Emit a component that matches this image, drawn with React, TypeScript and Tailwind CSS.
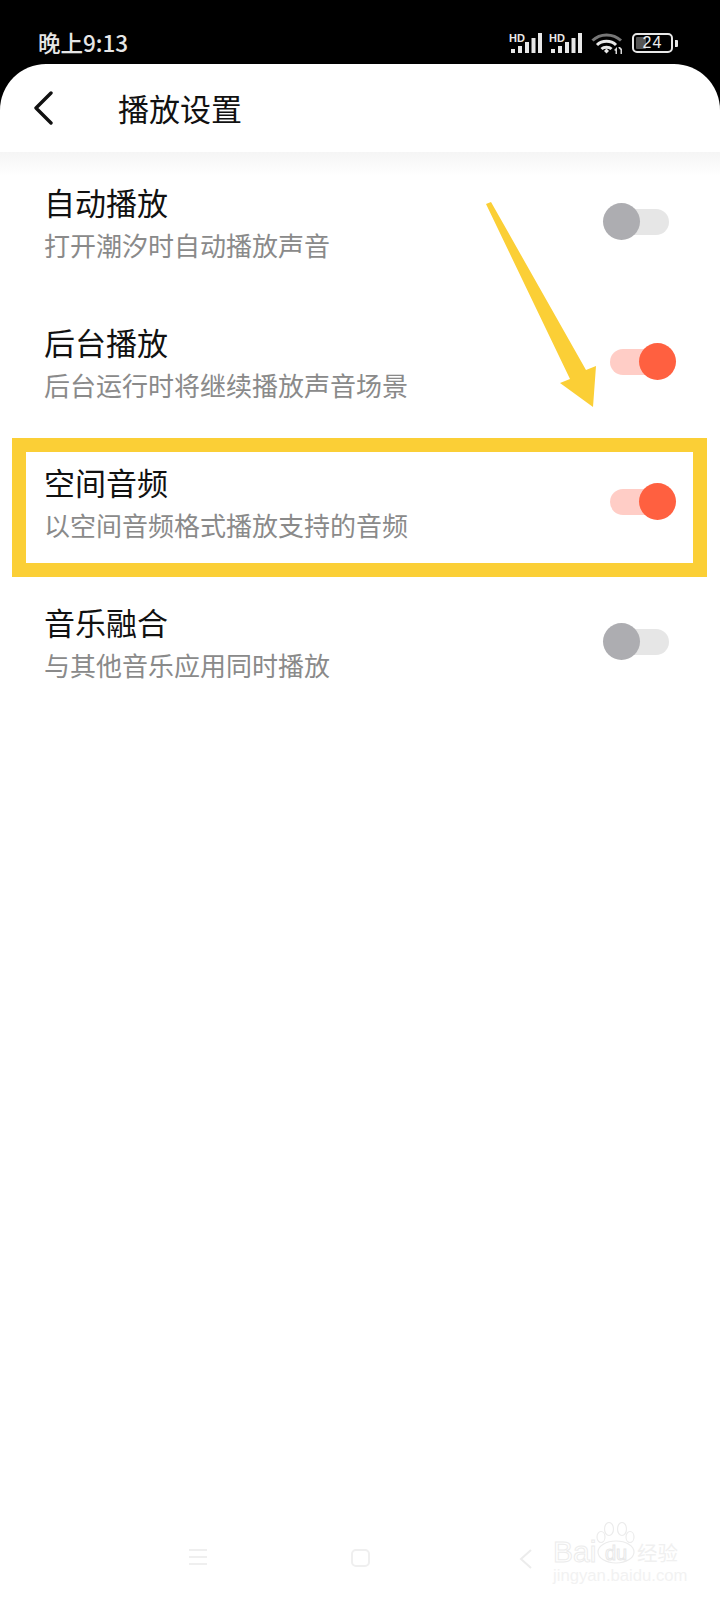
import React from 'react';

const settings = [
  { title: '自动播放', desc: '打开潮汐时自动播放声音', on: false },
  { title: '后台播放', desc: '后台运行时将继续播放声音场景', on: true },
  { title: '空间音频', desc: '以空间音频格式播放支持的音频', on: true, marked: true },
  { title: '音乐融合', desc: '与其他音乐应用同时播放', on: false },
];

const Signal = () => (
  <svg width="33" height="22" viewBox="0 0 33 22" className="block">
    <text x="0" y="9.5" fontSize="11" fontWeight="700" fill="#e8e8e8" fontFamily="'Liberation Sans', sans-serif">HD</text>
    <rect x="2" y="17" width="4" height="4" fill="#e8e8e8" />
    <rect x="9" y="14" width="4" height="7" fill="#e8e8e8" />
    <rect x="16" y="10" width="4" height="11" fill="#e8e8e8" />
    <rect x="22.5" y="6" width="4" height="15" fill="#e8e8e8" />
    <rect x="29" y="1" width="4" height="20" fill="#e8e8e8" />
  </svg>
);

const Wifi = () => (
  <svg width="32" height="24" viewBox="0 0 32 24" fill="none" className="block">
    <path d="M1.5 9.5 C9 2 22 2 30 9.5" stroke="#777" strokeWidth="3" />
    <path d="M6 14 C11 9 20 9 25 14" stroke="#e8e8e8" strokeWidth="3" />
    <path d="M10.5 18 C13 15.5 18 15.5 20.5 18" stroke="#e8e8e8" strokeWidth="3" />
    <path d="M13 20 L15.5 17.5 L18 20 L15.5 22.5 Z" fill="#e8e8e8" />
    <path d="M23 19 L26 16 V23 H24.5 V20 Z M27.5 16 H29 L31 18 V23 H29.5 V19 L27.5 17 Z" fill="#d8d8d8" />
  </svg>
);

const Battery = () => (
  <div className="flex items-center gap-[2px]">
    <div className="w-[41px] h-[20px] rounded-[5px] border-2 border-[#e8e8e8] p-[2px] relative">
      <div className="w-[10px] h-full bg-[#555] rounded-[1px]" />
      <span className="absolute inset-0 flex items-center justify-center text-[16px] leading-none tracking-[1px] text-[#eeeeee] font-['Liberation_Sans',sans-serif]">24</span>
    </div>
    <div className="w-[3px] h-[7px] bg-[#e8e8e8] rounded-r-[1px]" />
  </div>
);

const Toggle = ({ on }: { on: boolean }) => (
  <div className={`relative w-[59px] h-[26px] rounded-full mt-[52px] ${on ? 'bg-[#ffcdc6]' : 'bg-[#e6e6e6]'}`}>
    <div
      className={`absolute top-[-6px] w-[37px] h-[37px] rounded-full ${
        on ? 'right-[-7px] bg-[#ff6040]' : 'left-[-7px] bg-[#adadb1]'
      }`}
    />
  </div>
);

const Watermark = () => (
  <div className="absolute left-[553px] top-[1522px] w-[130px] h-[62px] pointer-events-none">
    <svg width="42" height="42" viewBox="0 0 42 42" fill="none" stroke="#ececec" strokeWidth="1.2" className="absolute left-[42px] top-0">
      <ellipse cx="14" cy="7" rx="4.5" ry="6.5" />
      <ellipse cx="27" cy="7" rx="4.5" ry="6.5" />
      <ellipse cx="6" cy="15" rx="4" ry="5.5" />
      <ellipse cx="35" cy="15" rx="4" ry="5.5" />
      <ellipse cx="21" cy="30" rx="18" ry="11" />
    </svg>
    <span className="absolute left-0 top-[13px] text-[30px] leading-[34px] text-transparent font-['Liberation_Sans',sans-serif] [-webkit-text-stroke:1px_#ececec]">
      Bai
    </span>
    <span className="absolute left-[52px] top-[20px] text-[20px] leading-[22px] text-transparent font-['Liberation_Sans',sans-serif] [-webkit-text-stroke:1px_#e8e8e8]">
      du
    </span>
    <span className="absolute left-[84px] top-[16px] text-[20.5px] leading-[28px] whitespace-nowrap text-[#f0f0f0]">
      经验
    </span>
    <span className="absolute left-0 top-[45px] text-[16.7px] leading-[18px] whitespace-nowrap text-[#f2f2f2] font-['Liberation_Sans',sans-serif]">
      jingyan.baidu.com
    </span>
  </div>
);

export default function App() {
  return (
    <div className="relative w-[720px] h-[1600px] bg-black flex flex-col font-['Noto_Sans_CJK_SC','Noto_Sans',sans-serif] overflow-hidden">
      {/* Status bar */}
      <div className="h-[64px] shrink-0 flex items-start justify-between pl-[38px] pr-[42px] pt-[29px]">
        <span className="text-[22.5px] leading-[26px] font-medium text-[#e6e6e6]">晚上9:13</span>
        <div className="flex items-center gap-[7px] mt-[2px]">
          <Signal />
          <Signal />
          <div className="ml-[2px] mr-[2px]">
            <Wifi />
          </div>
          <Battery />
        </div>
      </div>

      <div className="flex-1 flex flex-col bg-white rounded-t-[46px]">
        {/* Header */}
        <div className="h-[88px] shrink-0 flex items-center pl-[33px]">
          <svg width="20" height="34" viewBox="0 0 20 34" fill="none" className="mt-[-1px]">
            <path d="M18 2 L3 17 L18 32" stroke="#111" strokeWidth="3.4" strokeLinecap="round" strokeLinejoin="round" />
          </svg>
          <h1 className="ml-[65px] text-[31px] leading-[40px] font-normal text-[#111]">播放设置</h1>
        </div>

        {/* Settings list */}
        <div className="pt-[5px] bg-linear-to-b from-[#f5f5f5] to-white to-[24px]">
          {settings.map(item => (
            <div key={item.title} className="relative h-[140px] flex items-start justify-between pl-[44px] pr-[51px]">
              <div className="pt-[25px]">
                <div className="text-[31px] leading-[40px] text-[#111]">{item.title}</div>
                <div className="mt-[6px] text-[26px] leading-[34px] text-[#8a8a8a]">{item.desc}</div>
              </div>
              <Toggle on={item.on} />
              {item.marked && (
                <div className="absolute left-[12px] right-[13px] top-[1px] bottom-0 border-[14px] border-[#fbcf36]" />
              )}
            </div>
          ))}
        </div>

        {/* Nav bar */}
        <div className="mt-auto h-[51px] flex items-start">
          <div className="ml-[189px] w-[18px] flex flex-col gap-[5px]">
            <div className="h-[2px] bg-[#efefef]" />
            <div className="h-[2px] bg-[#efefef]" />
            <div className="h-[2px] bg-[#efefef]" />
          </div>
          <div className="ml-[144px] w-[19px] h-[18px] rounded-[5px] border-2 border-[#efefef]" />
          <svg width="13" height="20" viewBox="0 0 13 20" fill="none" className="ml-[149px]">
            <path d="M12 1 L2 10 L12 19" stroke="#ececec" strokeWidth="2" />
          </svg>
        </div>
      </div>

      {/* Annotation arrow */}
      <svg width="130" height="220" viewBox="0 0 130 220" className="absolute left-[480px] top-[195px]">
        <path d="M6 9 L11 7 L106 175 L116 171 L113 212 L80 188 L90 184 Z" fill="#fbcf36" />
      </svg>

      <Watermark />
    </div>
  );
}
